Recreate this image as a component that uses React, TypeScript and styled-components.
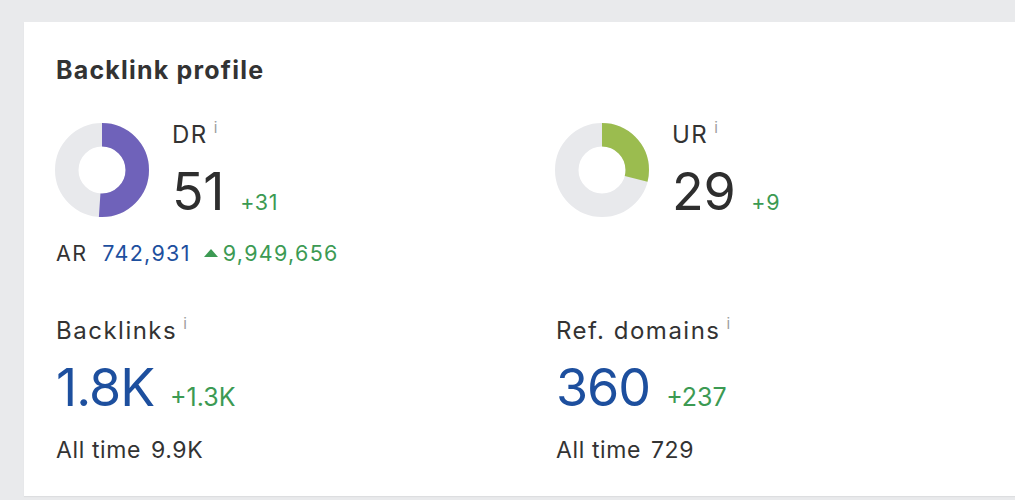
import styled, { createGlobalStyle } from "styled-components";

const GlobalStyle = createGlobalStyle`
  html, body {
    margin: 0;
    padding: 0;
    overflow: hidden;
    background: #e9eaec;
    font-family: Inter, "Liberation Sans", Arial, sans-serif;
    color: #333;
  }
`;

const Page = styled.div`
  padding: 22px 0 0 24px;
  height: 500px;
  box-sizing: border-box;
`;

const Card = styled.section`
  width: 1064px;
  background: #fff;
  padding: 36px 32px 34px;
  box-sizing: border-box;
  box-shadow: 0 1px 1px rgba(0, 0, 0, 0.05);
`;

const Title = styled.h2`
  margin: 0 0 40px;
  font-size: 25px;
  line-height: 1;
  font-weight: 700;
  letter-spacing: 1.2px;
  color: #333;
`;

const Grid = styled.div`
  display: grid;
  grid-template-columns: 500px 500px;
  row-gap: 54.5px;
`;

const Column = styled.div`
  display: flex;
  flex-direction: column;
`;

const DonutRow = styled.div`
  display: flex;
  align-items: flex-start;
  gap: 23px;
`;

const DonutBox = styled.svg`
  flex: none;
  margin-left: -1px;
  display: block;
`;

const Label = styled.div`
  font-size: 24px;
  line-height: 1;
  letter-spacing: 1.5px;
  color: #333;
`;

const Info = styled.span`
  font-size: 15px;
  line-height: 0;
  color: #9d9d9d;
  margin-left: 6px;
  vertical-align: 10px;
  letter-spacing: 0;
`;

const ValueLine = styled.div`
  display: flex;
  align-items: baseline;
  margin-top: 19px;
`;

const BigValue = styled.span<{ $tone: "dark" | "blue" }>`
  font-size: 52px;
  line-height: 1;
  letter-spacing: ${(p) => (p.$tone === "blue" ? "-1px" : "-0.3px")};
  color: ${(p) => (p.$tone === "blue" ? "#1d4f9e" : "#2e2e2e")};
`;

const Delta = styled.span<{ $size: number; $gap: number }>`
  font-size: ${(p) => p.$size}px;
  line-height: 1;
  letter-spacing: ${(p) => (p.$size > 23 ? "0" : "0.6px")};
  color: #3c9a53;
  margin-left: ${(p) => p.$gap}px;
`;

const ArLine = styled.div`
  margin-top: 25px;
  font-size: 21.5px;
  line-height: 1;
  letter-spacing: 1.3px;
  color: #333;
`;

const ArRank = styled.span`
  color: #1d4f9e;
  margin-left: 15px;
`;

const ArGrowth = styled.span`
  color: #3c9a53;
`;

const UpArrow = styled.svg`
  margin: 0 5px 0 13px;
  vertical-align: 4px;
`;

const AllTime = styled.div`
  margin-top: 25px;
  font-size: 23px;
  line-height: 1;
  letter-spacing: 0.6px;
  color: #333;
`;

const AllTimeValue = styled.span`
  margin-left: 10px;
`;

const Donut = ({ value, color }: { value: number; color: string }) => {
  const r = 35.25;
  const c = 2 * Math.PI * r;
  return (
    <DonutBox width="94" height="94" viewBox="0 0 94 94">
      <circle cx="47" cy="47" r={r} fill="none" stroke="#e8e9ec" strokeWidth="23.5" />
      <circle
        cx="47"
        cy="47"
        r={r}
        fill="none"
        stroke={color}
        strokeWidth="23.5"
        strokeDasharray={`${(c * value) / 100} ${c}`}
        transform="rotate(-90 47 47)"
      />
    </DonutBox>
  );
};

const RatingMetric = ({
  name,
  value,
  delta,
  color,
}: {
  name: string;
  value: number;
  delta: string;
  color: string;
}) => (
  <DonutRow>
    <Donut value={value} color={color} />
    <div>
      <Label>
        {name}
        <Info>i</Info>
      </Label>
      <ValueLine>
        <BigValue $tone="dark">{value}</BigValue>
        <Delta $size={21.5} $gap={16}>
          {delta}
        </Delta>
      </ValueLine>
    </div>
  </DonutRow>
);

const CountMetric = ({
  name,
  value,
  delta,
  total,
}: {
  name: string;
  value: string;
  delta: string;
  total: string;
}) => (
  <Column>
    <Label>
      {name}
      <Info>i</Info>
    </Label>
    <ValueLine>
      <BigValue $tone="blue">{value}</BigValue>
      <Delta $size={25} $gap={16}>
        {delta}
      </Delta>
    </ValueLine>
    <AllTime>
      All time<AllTimeValue>{total}</AllTimeValue>
    </AllTime>
  </Column>
);

const App = () => {
  return (
    <Page>
      <GlobalStyle />
      <Card>
        <Title>Backlink profile</Title>
        <Grid>
          <Column>
            <RatingMetric name="DR" value={51} delta="+31" color="#6f62ba" />
            <ArLine>
              AR
              <ArRank>742,931</ArRank>
              <UpArrow width="14" height="8" viewBox="0 0 14 8">
                <polygon points="7,0 14,8 0,8" fill="#3c9a53" />
              </UpArrow>
              <ArGrowth>9,949,656</ArGrowth>
            </ArLine>
          </Column>
          <Column>
            <RatingMetric name="UR" value={29} delta="+9" color="#9bbc4f" />
          </Column>
          <CountMetric name="Backlinks" value="1.8K" delta="+1.3K" total="9.9K" />
          <CountMetric name="Ref. domains" value="360" delta="+237" total="729" />
        </Grid>
      </Card>
    </Page>
  );
};

export default App;
